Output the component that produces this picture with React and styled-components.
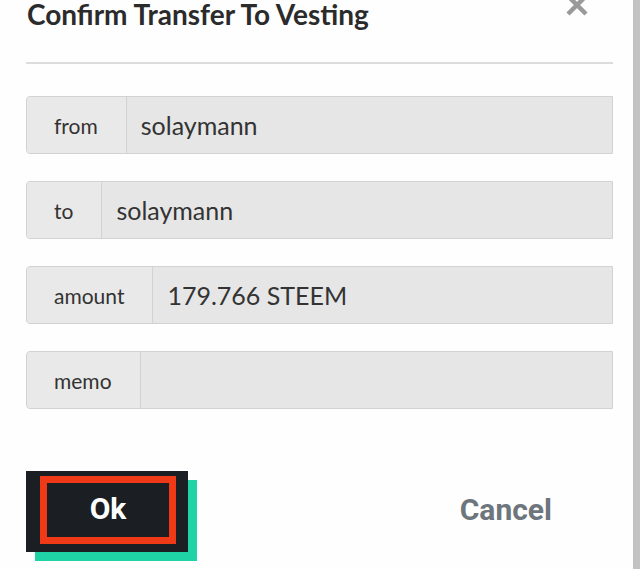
import React from "react";
import styled, { createGlobalStyle } from "styled-components";

const Global = createGlobalStyle`
  html, body { margin: 0; padding: 0; }
  body {
    background: #c3c3c3;
    font-family: "Lato", "Open Sans", sans-serif;
    overflow: hidden;
  }
`;

const Modal = styled.div`
  width: 633px;
  height: 569px;
  background: #fefefe;
  box-sizing: border-box;
  padding: 0 20px 0 26px;
  display: flex;
  flex-direction: column;
`;

const Header = styled.div`
  display: flex;
  align-items: flex-start;
  justify-content: space-between;
  height: 62px;
  border-bottom: 2px solid #dcdcdc;
  box-sizing: content-box;
`;

const Title = styled.h2`
  margin: 0;
  padding-left: 1px;
  font-family: "Lato", sans-serif;
  font-weight: 700;
  font-size: 28px;
  line-height: 28px;
  color: #2b2b2b;
`;

const Close = styled.button`
  border: 0;
  background: none;
  padding: 0;
  margin: -7px 24px 0 0;
  width: 24px;
  height: 24px;
  display: flex;
  cursor: pointer;
`;

const Form = styled.div`
  display: flex;
  flex-direction: column;
  gap: 27px;
  margin-top: 32px;
`;

const Group = styled.div`
  display: flex;
  height: 58px;
  box-sizing: border-box;
  border: 1px solid #d2d2d2;
  border-radius: 4px 0 0 4px;
  background: #e6e6e6;
  overflow: hidden;
`;

const Label = styled.span`
  display: flex;
  align-items: center;
  padding: 0 28px 0 27px;
  background: #e9e9e9;
  border-right: 1px solid #d2d2d2;
  font-size: 21px;
  color: #333;
`;

const Value = styled.span`
  display: flex;
  align-items: center;
  flex: 1;
  padding: 0 14px;
  font-size: 25px;
  color: #333;
`;

const Actions = styled.div`
  display: flex;
  align-items: center;
  justify-content: space-between;
  margin-top: 62px;
  padding-right: 61px;
`;

const OkButton = styled.button`
  width: 162px;
  height: 81px;
  border: 0;
  padding: 5px 12px 8px 14px;
  background: #1b1f23;
  box-shadow: 9px 9px 0 #1fd3a6;
  display: flex;
  cursor: pointer;
`;

const OkInner = styled.span`
  flex: 1;
  border: 7px solid #f03a17;
  padding-bottom: 3px;
  display: flex;
  align-items: center;
  justify-content: center;
  font-family: "Roboto", sans-serif;
  font-weight: 700;
  font-size: 30px;
  color: #fff;
`;

const CancelButton = styled.button`
  border: 0;
  background: none;
  padding: 0;
  margin-top: -4px;
  font-family: "Roboto", sans-serif;
  font-weight: 700;
  font-size: 30px;
  color: #6d757d;
  cursor: pointer;
`;

const rows = [
  ["from", "solaymann"],
  ["to", "solaymann"],
  ["amount", "179.766 STEEM"],
  ["memo", ""],
];

export default function App() {
  return (
    <>
      <Global />
      <Modal>
        <Header>
          <Title>Confirm Transfer To Vesting</Title>
          <Close aria-label="close">
            <svg width="24" height="24" viewBox="0 0 24 24">
              <path d="M3 3 L21 21 M21 3 L3 21" stroke="#9a9a9a" strokeWidth="4.5" strokeLinecap="butt" />
            </svg>
          </Close>
        </Header>
        <Form>
          {rows.map(([l, v]) => (
            <Group key={l}>
              <Label>{l}</Label>
              <Value>{v}</Value>
            </Group>
          ))}
        </Form>
        <Actions>
          <OkButton>
            <OkInner>Ok</OkInner>
          </OkButton>
          <CancelButton>Cancel</CancelButton>
        </Actions>
      </Modal>
    </>
  );
}
